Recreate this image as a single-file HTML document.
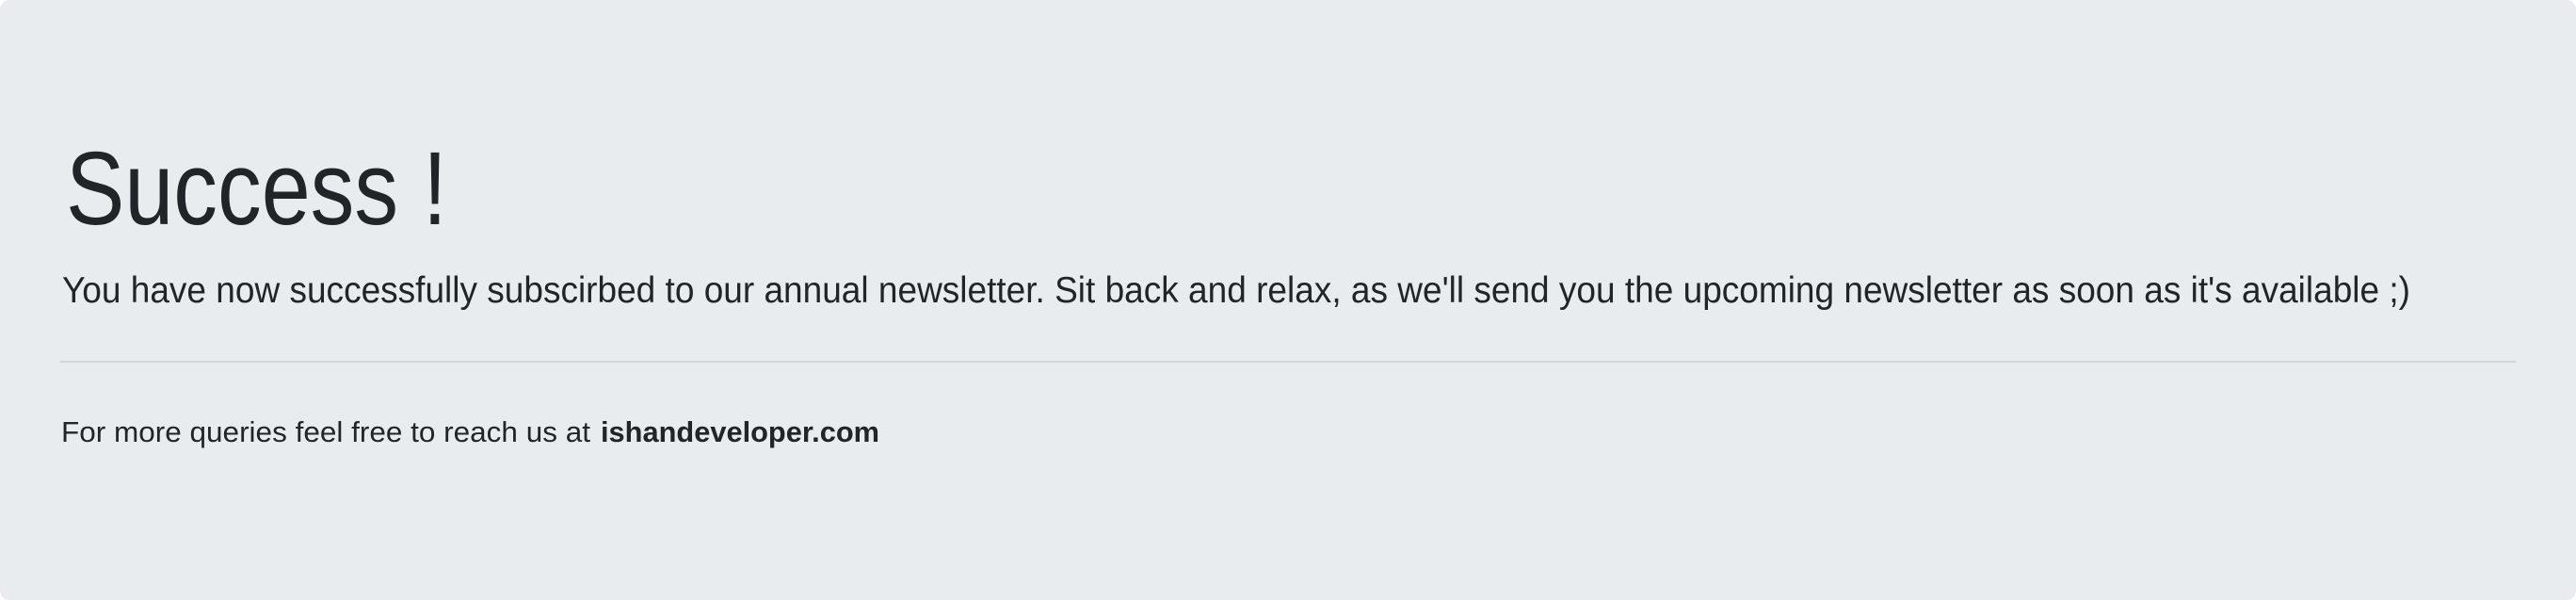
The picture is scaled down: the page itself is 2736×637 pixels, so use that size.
<!DOCTYPE html>
<html><head><meta charset="utf-8"><style>
html,body{margin:0;padding:0;background:#fff;}
.j{position:absolute;left:0;top:0;width:2736px;height:637px;background:#e9ecef;border-radius:10px;overflow:hidden;}
svg{position:absolute;left:0;top:0;}
text{font-family:"Liberation Sans",sans-serif;fill:#212529;}
</style></head><body>
<div class="j">
<svg width="2736" height="637" viewBox="0 0 2736 637">
<text x="70" y="238" font-size="110" textLength="405" lengthAdjust="spacingAndGlyphs">Success !</text>
<text x="66" y="321" font-size="38.5" textLength="2494" lengthAdjust="spacingAndGlyphs">You have now successfully subscirbed to our annual newsletter. Sit back and relax, as we'll send you the upcoming newsletter as soon as it's available ;)</text>
<rect x="64" y="383" width="2608" height="2" fill="#d2d4d7"/>
<text x="65" y="469" font-size="30.5" textLength="562" lengthAdjust="spacingAndGlyphs">For more queries feel free to reach us at</text>
<text x="638" y="469" font-size="30.5" font-weight="bold" textLength="296" lengthAdjust="spacingAndGlyphs">ishandeveloper.com</text>
</svg>
</div>
</body></html>
